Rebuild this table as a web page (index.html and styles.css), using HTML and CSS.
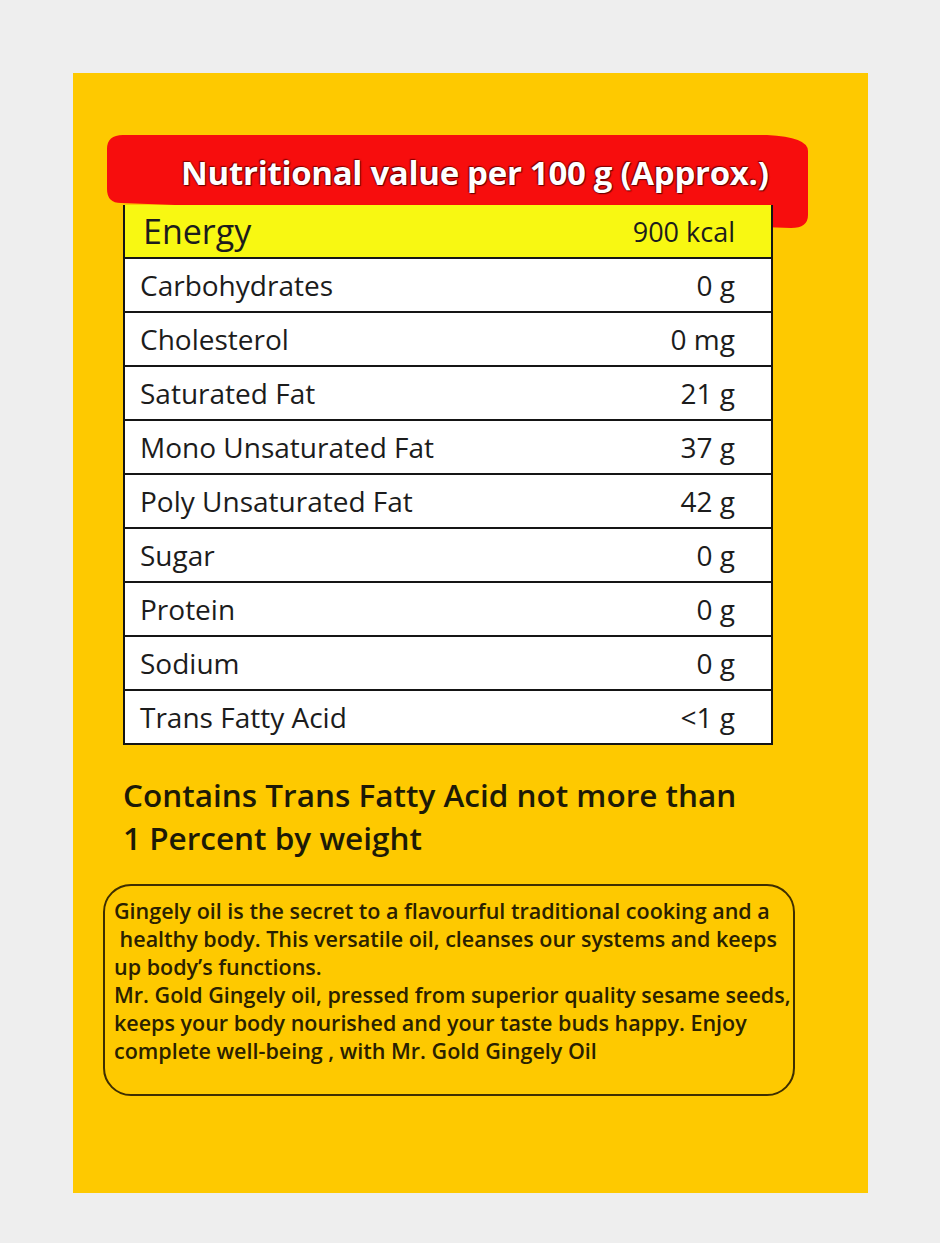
FILE: index.html
```html
<!DOCTYPE html>
<html lang="en">
<head>
<meta charset="utf-8">
<title>Nutritional value</title>
<link rel="stylesheet" href="styles.css">
</head>
<body>
<div class="panel">
  <div class="banner">
    <svg class="banner-bg" viewBox="0 0 701 96" preserveAspectRatio="none" aria-hidden="true">
      <path d="M16 2 L660 2 Q701 4 701 18 L701 82 Q701 95 684 95 L14 70 Q0 70 0 56 L0 16 Q0 2 16 2 Z" fill="#f70d0d"/>
    </svg>
    <h1 class="banner-title">Nutritional value per 100 g (Approx.)</h1>
  </div>
  <div class="table">
    <div class="row row-energy"><span class="label">Energy</span><span class="value">900 kcal</span></div>
    <div class="row"><span class="label">Carbohydrates</span><span class="value">0 g</span></div>
    <div class="row"><span class="label">Cholesterol</span><span class="value">0 mg</span></div>
    <div class="row"><span class="label">Saturated Fat</span><span class="value">21 g</span></div>
    <div class="row"><span class="label">Mono Unsaturated Fat</span><span class="value">37 g</span></div>
    <div class="row"><span class="label">Poly Unsaturated Fat</span><span class="value">42 g</span></div>
    <div class="row"><span class="label">Sugar</span><span class="value">0 g</span></div>
    <div class="row"><span class="label">Protein</span><span class="value">0 g</span></div>
    <div class="row"><span class="label">Sodium</span><span class="value">0 g</span></div>
    <div class="row"><span class="label">Trans Fatty Acid</span><span class="value">&lt;1 g</span></div>
  </div>
  <p class="notice">Contains Trans Fatty Acid not more than<br>1 Percent by weight</p>
  <div class="about">
    <p class="about-text">Gingely oil is the secret to a flavourful traditional cooking and a<br>&nbsp;healthy body. This versatile oil, cleanses our systems and keeps<br>up body’s functions.<br>Mr. Gold Gingely oil, pressed from superior quality sesame seeds,<br>keeps your body nourished and your taste buds happy. Enjoy<br>complete well-being , with Mr. Gold Gingely Oil</p>
  </div>
</div>
</body>
</html>
```
FILE: styles.css
```css
html, body {
  margin: 0;
  padding: 0;
}
body {
  background: #eeeeee;
  font-family: "Open Sans", Lato, sans-serif;
  width: 940px;
  height: 1243px;
  overflow: hidden;
}
.panel {
  margin: 73px 0 0 73px;
  width: 795px;
  height: 1120px;
  background: #fec900;
  padding-top: 60px;
  box-sizing: border-box;
}
.banner {
  position: relative;
  margin-left: 34px;
  width: 701px;
  height: 72px;
  display: flex;
  align-items: center;
}
.banner-bg {
  position: absolute;
  left: 0;
  top: 0;
  width: 701px;
  height: 96px;
}
.banner-title {
  position: relative;
  margin: 0 0 0 74px;
  padding-top: 6px;
  font-size: 33px;
  font-weight: 700;
  color: #ffffff;
  letter-spacing: -0.3px;
  text-shadow: 0 0 2px #6a0000, 1px 1px 1px #6a0000, -1px -1px 1px #8a0000;
  white-space: nowrap;
}
.table {
  position: relative;
  margin-left: 50px;
  width: 650px;
  border: 2px solid #151515;
  border-top: none;
  border-bottom: none;
  box-sizing: border-box;
  background: #ffffff;
}
.row {
  height: 52px;
  border-bottom: 2px solid #151515;
  display: flex;
  align-items: center;
  justify-content: space-between;
  padding: 0 36px 0 15px;
  font-size: 28px;
  color: #1c1c1c;
}
.row-energy {
  background: #f8f812;
  font-size: 34px;
  padding-left: 18px;
}
.row-energy .value {
  font-size: 27px;
}
.notice {
  margin: 28px 0 0 50px;
  font-size: 31.5px;
  font-weight: 600;
  line-height: 43px;
  color: #1d1a06;
}
.about {
  margin: 25px 0 0 30px;
  width: 692px;
  height: 212px;
  border: 2px solid #3e2e00;
  border-radius: 28px;
  box-sizing: border-box;
  padding: 11px 0 0 9px;
}
.about-text {
  margin: 0;
  font-size: 21.5px;
  font-weight: 600;
  line-height: 28px;
  color: #2a2100;
}
```
